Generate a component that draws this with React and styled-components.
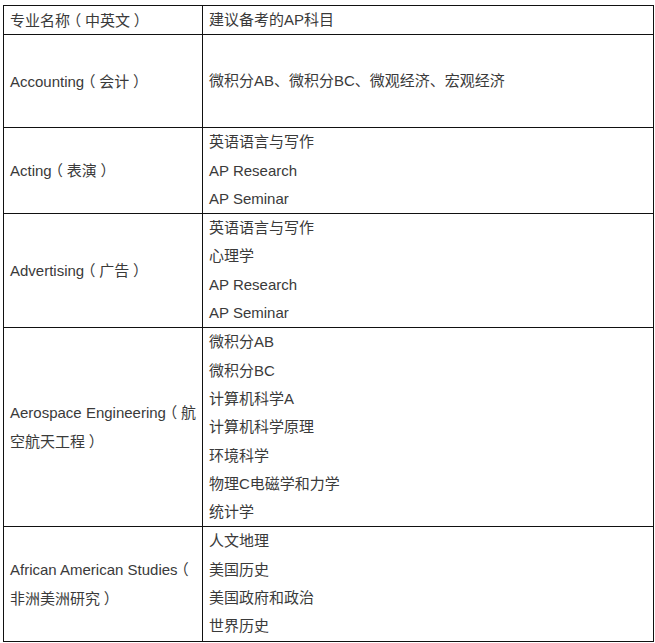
import React from "react";
import styled, { createGlobalStyle } from "styled-components";

const Global = createGlobalStyle`
  body {
    margin: 0;
    background: #ffffff;
    font-family: "Liberation Sans", "Noto Sans CJK SC", sans-serif;
  }
`;

const rows = [
  { name: "Accounting（会计）", subjects: ["微积分AB、微积分BC、微观经济、宏观经济"], height: 92 },
  { name: "Acting（表演）", subjects: ["英语语言与写作", "AP Research", "AP Seminar"] },
  { name: "Advertising（广告）", subjects: ["英语语言与写作", "心理学", "AP Research", "AP Seminar"] },
  {
    name: ["Aerospace Engineering（航", "空航天工程）"],
    subjects: ["微积分AB", "微积分BC", "计算机科学A", "计算机科学原理", "环境科学", "物理C电磁学和力学", "统计学"],
  },
  {
    name: ["African American Studies（", "非洲美洲研究）"],
    subjects: ["人文地理", "美国历史", "美国政府和政治", "世界历史"],
  },
];

// full-width brackets drawn centred in their box, as in the source page
function withParens(text) {
  return text.split(/([（）])/).map((part, i) =>
    part === "（" || part === "）" ? <Paren key={i}>{part}</Paren> : part
  );
}

function App() {
  return (
    <>
      <Global />
      <Table>
        <Row>
          <NameCell $head>
            <NameLine>{withParens("专业名称（中英文）")}</NameLine>
          </NameCell>
          <SubjectCell>
            <Line>建议备考的AP科目</Line>
          </SubjectCell>
        </Row>
        {rows.map((r, i) => (
          <Row key={i} $height={r.height}>
            <NameCell>
              {(Array.isArray(r.name) ? r.name : [r.name]).map((n, j) => (
                <NameLine key={j}>{withParens(n)}</NameLine>
              ))}
            </NameCell>
            <SubjectCell>
              {r.subjects.map((s, j) => (
                <Line key={j}>{s}</Line>
              ))}
            </SubjectCell>
          </Row>
        ))}
      </Table>
    </>
  );
}

let Table = styled.div`
  margin: 5px 0 0 3px;
  width: 649px;
  border: 1px solid #111;
  border-bottom: none;
  color: #3a3a3a;
  font-size: 15px;
`;

let Row = styled.div`
  display: grid;
  grid-template-columns: 199px 1fr;
  border-bottom: 1px solid #111;
  min-height: ${(p) => (p.$height ? p.$height + "px" : "auto")};
`;

let NameCell = styled.div`
  border-right: 1px solid #111;
  padding: 0 4px 0 6px;
  display: flex;
  flex-direction: column;
  justify-content: center;
  line-height: ${(p) => (p.$head ? "27px" : "28px")};
  white-space: nowrap;
`;

let NameLine = styled.div``;

let Paren = styled.span`
  font-family: "Noto Sans CJK SC", sans-serif;
  font-feature-settings: "halt";
  padding: 0 3.75px;
`;

let SubjectCell = styled.div`
  padding: 0 6px;
  display: flex;
  flex-direction: column;
  justify-content: center;
`;

let Line = styled.div`
  height: 28.3px;
  line-height: 28.3px;
  white-space: nowrap;
`;

export default App;
